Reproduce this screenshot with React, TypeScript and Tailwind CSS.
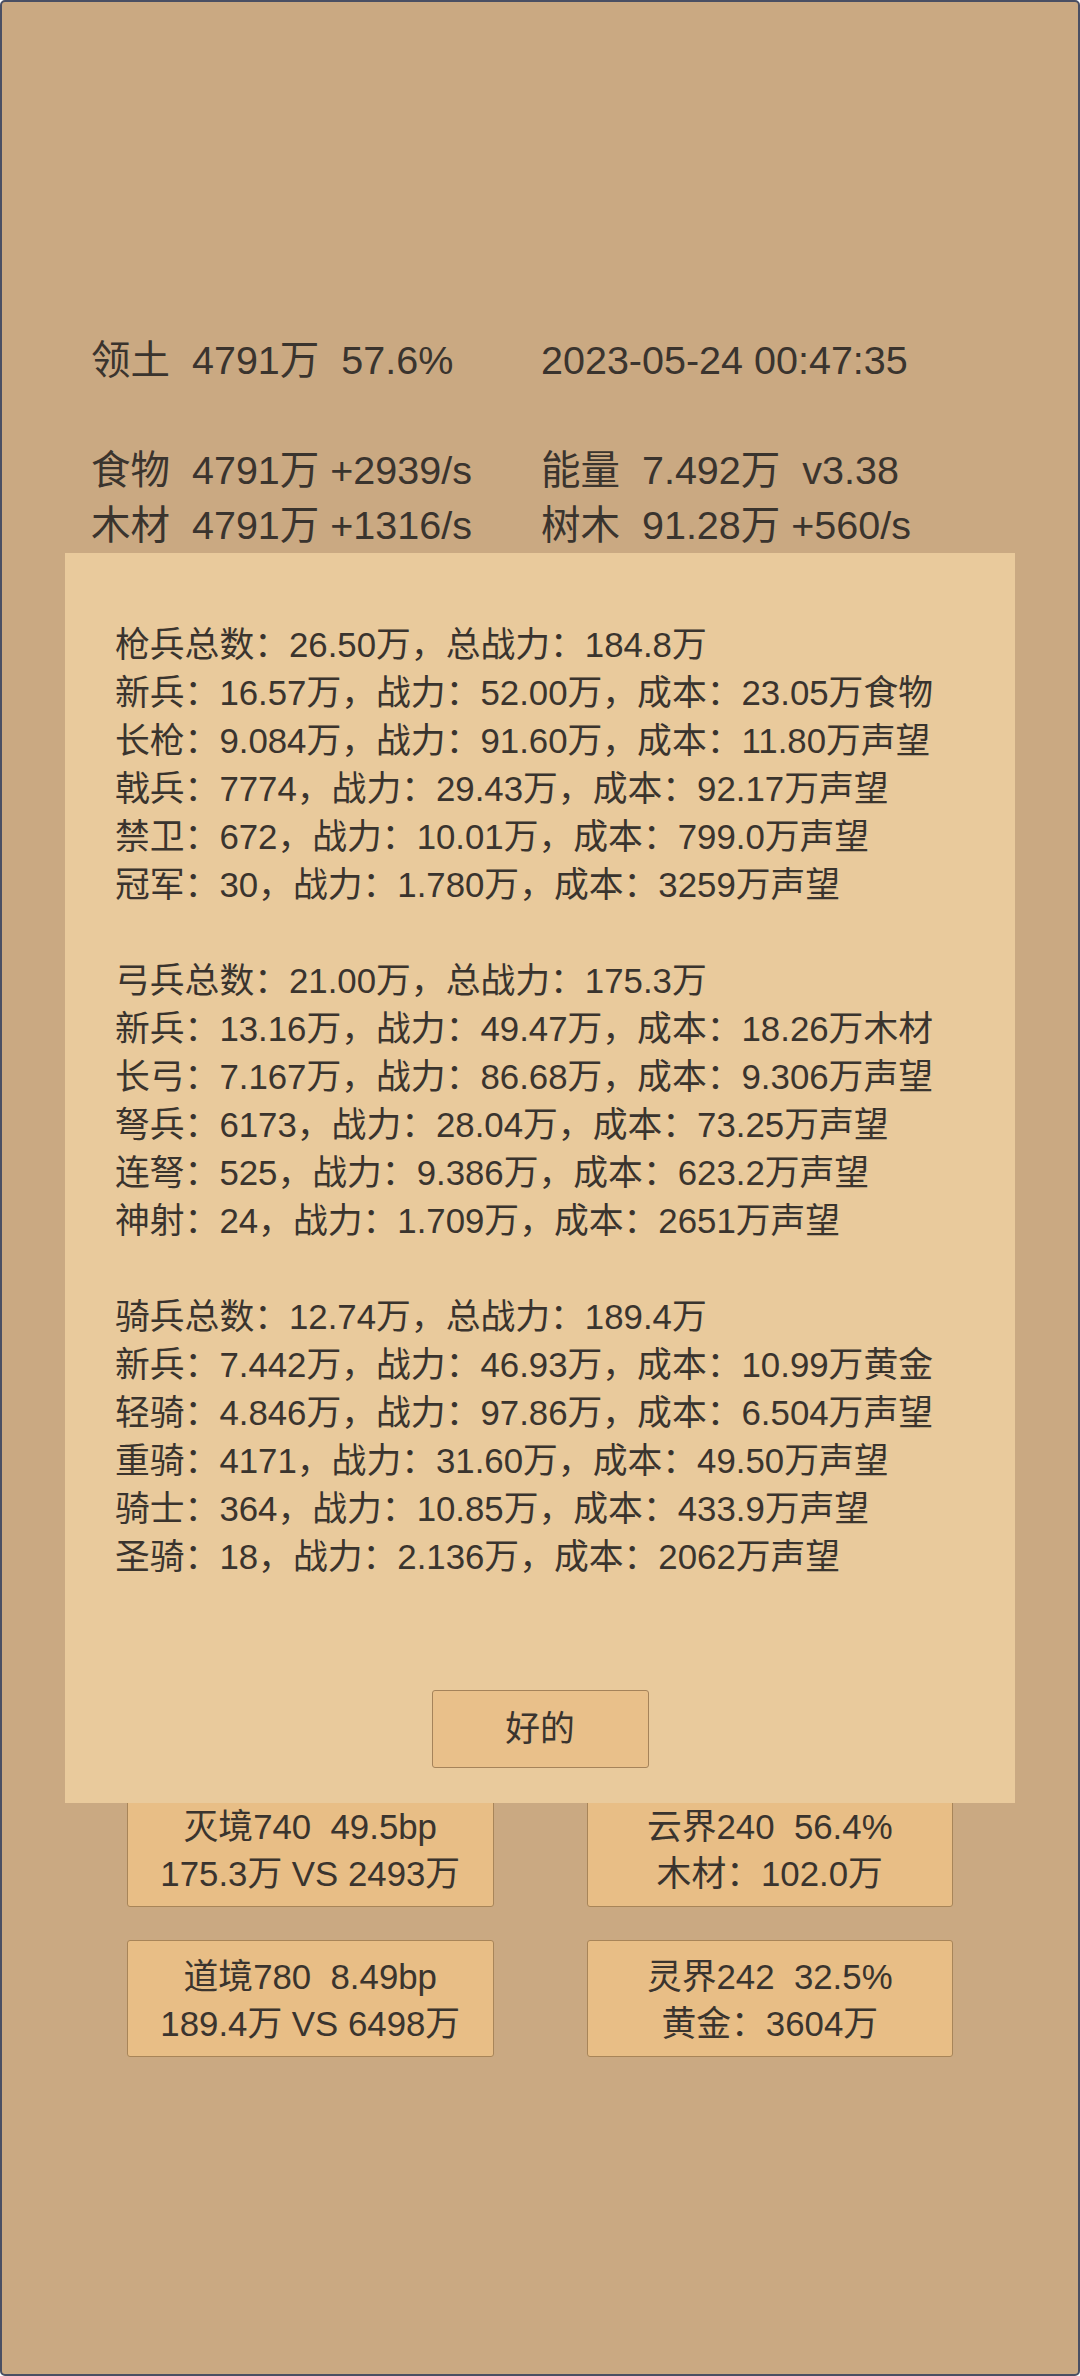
import React from 'react';

const font = { fontFamily: '"Liberation Sans", "Noto Sans CJK SC", sans-serif' };

const App = () => {
  const stats = [
    ['领土  4791万  57.6%', '2023-05-24 00:47:35'],
    ['', ''],
    ['食物  4791万 +2939/s', '能量  7.492万  v3.38'],
    ['木材  4791万 +1316/s', '树木  91.28万 +560/s'],
  ];

  const cards = [
    ['灭境740  49.5bp', '175.3万 VS 2493万'],
    ['云界240  56.4%', '木材：102.0万'],
    ['道境780  8.49bp', '189.4万 VS 6498万'],
    ['灵界242  32.5%', '黄金：3604万'],
  ];

  const groups = [
    [
      '枪兵总数：26.50万，总战力：184.8万',
      '新兵：16.57万，战力：52.00万，成本：23.05万食物',
      '长枪：9.084万，战力：91.60万，成本：11.80万声望',
      '戟兵：7774，战力：29.43万，成本：92.17万声望',
      '禁卫：672，战力：10.01万，成本：799.0万声望',
      '冠军：30，战力：1.780万，成本：3259万声望',
    ],
    [
      '弓兵总数：21.00万，总战力：175.3万',
      '新兵：13.16万，战力：49.47万，成本：18.26万木材',
      '长弓：7.167万，战力：86.68万，成本：9.306万声望',
      '弩兵：6173，战力：28.04万，成本：73.25万声望',
      '连弩：525，战力：9.386万，成本：623.2万声望',
      '神射：24，战力：1.709万，成本：2651万声望',
    ],
    [
      '骑兵总数：12.74万，总战力：189.4万',
      '新兵：7.442万，战力：46.93万，成本：10.99万黄金',
      '轻骑：4.846万，战力：97.86万，成本：6.504万声望',
      '重骑：4171，战力：31.60万，成本：49.50万声望',
      '骑士：364，战力：10.85万，成本：433.9万声望',
      '圣骑：18，战力：2.136万，成本：2062万声望',
    ],
  ];

  return (
    <div
      style={font}
      className="relative w-[1080px] h-[2376px] overflow-hidden rounded-[5px] border-2 border-[#4a4f63] bg-[#caa982] text-[#3a342e]"
    >
      {/* resource header */}
      <div className="pt-[331px] pl-[89px]">
        {stats.map((row, i) => (
          <div key={i} className="grid grid-cols-[450px_1fr] h-[55px] text-[39.5px] leading-[55px] whitespace-pre">
            <span>{row[0]}</span>
            <span>{row[1]}</span>
          </div>
        ))}
      </div>

      {/* realm cards */}
      <div className="mt-[1237px] grid grid-cols-2 gap-x-[93px] gap-y-[33px] px-[125px]">
        {cards.map((c) => (
          <div
            key={c[0]}
            className="flex h-[117px] flex-col items-center justify-center rounded-[3px] border border-[#a88559] bg-[#e8be86] pt-[2px] text-[34.8px] leading-[47px] whitespace-pre"
          >
            <span>{c[0]}</span>
            <span>{c[1]}</span>
          </div>
        ))}
      </div>

      {/* army dialog */}
      <div className="absolute left-[63px] top-[551px] flex h-[1250px] w-[950px] flex-col bg-[#e9ca9c] pt-[68px] pl-[50px]">
        <div className="text-[34.8px] leading-[48px]">
          {groups.map((g, gi) => (
            <div key={gi} className={gi > 0 ? 'mt-[48px]' : ''}>
              {g.map((line) => (
                <div key={line}>{line}</div>
              ))}
            </div>
          ))}
        </div>
        <div className="mt-[109px] flex justify-center pr-[50px]">
          <button className="h-[78px] w-[217px] rounded-[3px] border border-[#a5835a] bg-[#e9c08a] text-[34.8px] text-[#3a342e]">
            好的
          </button>
        </div>
      </div>
    </div>
  );
};

export default App;
